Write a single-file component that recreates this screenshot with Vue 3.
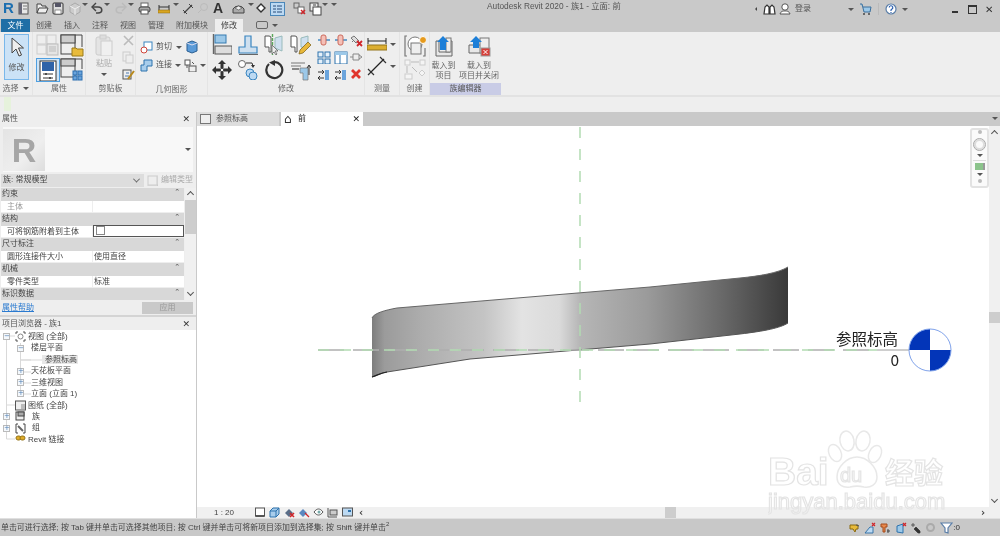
<script setup>
import { h } from 'vue'

// Small toolbar glyphs. Each string is the inside of an svg whose viewBox equals its pixel size.
const icons = {
  home: '<rect x="1" y="1" width="9" height="11" fill="#e8e8e8" stroke="#555"/><rect x="1" y="1" width="3" height="11" fill="#667"/><path d="M5 4h4M5 7h4" stroke="#777"/>',
  open: '<path d="M1 11V2h4l1 2h4v2M1 11l2-5h9l-2 5z" fill="#eee" stroke="#444"/>',
  save: '<rect x="1" y="1" width="10" height="11" rx="1" fill="#ddd" stroke="#333"/><rect x="3" y="1" width="6" height="4" fill="#556"/><rect x="3" y="8" width="6" height="4" fill="#fff" stroke="#555" stroke-width=".6"/>',
  cube: '<path d="M2 4l5-3 5 3v6l-5 3-5-3z" fill="#ccc" stroke="#aaa"/><path d="M2 4l5 3 5-3M7 7v6" stroke="#eee" fill="none"/>',
  undo: '<path d="M2 5h5c5 0 5 6 0 6H5" fill="none" stroke="#444" stroke-width="1.6"/><path d="M5 1L1 5l4 4" fill="none" stroke="#444" stroke-width="1.4"/>',
  redo: '<path d="M10 5H5c-5 0-5 6 0 6h2" fill="none" stroke="#bbb" stroke-width="1.6"/><path d="M7 1l4 4-4 4" fill="none" stroke="#bbb" stroke-width="1.4"/>',
  print: '<rect x="3" y="1" width="7" height="4" fill="#fff" stroke="#666"/><rect x="1" y="5" width="11" height="5" rx="2" fill="#aaa" stroke="#444"/><rect x="3" y="8" width="7" height="4" fill="#fff" stroke="#555"/>',
  dim: '<path d="M1 3v5M11 3v5M1 5h10" stroke="#333"/><rect x="0" y="8" width="12" height="3" fill="#d9a520" stroke="#8a6a10" stroke-width=".5"/>',
  line: '<path d="M2 11L10 3" stroke="#444" stroke-width="1.2"/><path d="M1 8l4 4M7 2l4 4" stroke="#444"/>',
  tag: '<circle cx="7" cy="5" r="3.5" fill="none" stroke="#bbb"/><path d="M1 11l3-3" stroke="#bbb"/>',
  view3d: '<path d="M1 7a6 5 0 0 1 11 0v4H1z" fill="#aaa" stroke="#444"/><path d="M3 6l3.500-2 3.500 2-3.500 2z" fill="#eee" stroke="#444" stroke-width=".6"/>',
  diamond: '<path d="M5 2l4 4-4 4-4-4z" fill="#fff" stroke="#333" stroke-width="1.400"/>',
  thin: '<rect x=".5" y=".5" width="14" height="13" fill="#bcd9f2" stroke="#4a86b8"/><path d="M3 4h3M3 7h3M3 10h3M7 4h5M7 7h5M7 10h5" stroke="#264a78"/>',
  xwin: '<rect x="1" y="1" width="5" height="5" fill="#ccc" stroke="#666"/><rect x="5" y="5" width="6" height="6" fill="#fff" stroke="#666"/><path d="M8 8l4 4M12 8l-4 4" stroke="#d0252a" stroke-width="1.500"/>',
  tile: '<rect x="1" y="1" width="8" height="8" fill="#eee" stroke="#444"/><rect x="4" y="5" width="8" height="8" fill="#fff" stroke="#444"/><path d="M4 3h3" stroke="#444"/>',
  cursor: '<path d="M5 3v15l4-4 3 7 2.500-1-3-7h5z" fill="#eee" stroke="#444"/>',
  famA: '<rect x="1" y="1" width="9" height="9" fill="#eee" stroke="#ccc"/><rect x="11" y="1" width="9" height="9" fill="#eee" stroke="#ccc"/><rect x="1" y="11" width="9" height="9" fill="#eee" stroke="#ccc"/><rect x="11" y="10" width="11" height="11" fill="#e4e4e4" stroke="#bbb"/><path d="M13 13h7M13 15h7M13 17h7" stroke="#bbb"/>',
  famB: '<rect x="1" y="1" width="14" height="19" fill="#eee" stroke="#444"/><rect x="1" y="1" width="14" height="8" fill="#ccc" stroke="#444"/><path d="M15 1h7v12" fill="none" stroke="#444"/><path d="M12 14h4l1 1h6v7H12z" fill="#e8bb3c" stroke="#9a7a18"/>',
  prop: '<rect x="3" y="2" width="16" height="20" fill="#fff" stroke="#333"/><rect x="5" y="3" width="12" height="9" fill="#2f63a8"/><path d="M6 15h10M6 19h10" stroke="#333"/><path d="M9 14v2M13 18v2" stroke="#333" stroke-width="1.500"/>',
  famT: '<rect x="1" y="1" width="14" height="18" fill="#eee" stroke="#444"/><rect x="1" y="1" width="14" height="7" fill="#ccc" stroke="#444"/><path d="M15 1h7v10" fill="none" stroke="#444"/><rect x="13" y="13" width="4" height="4" fill="#6aa4dc" stroke="#2d6fb0"/><rect x="18" y="13" width="4" height="4" fill="#6aa4dc" stroke="#2d6fb0"/><rect x="13" y="18" width="4" height="4" fill="#6aa4dc" stroke="#2d6fb0"/><rect x="18" y="18" width="4" height="4" fill="#6aa4dc" stroke="#2d6fb0"/>',
  paste: '<rect x="1" y="3" width="14" height="18" rx="2" fill="#e4e4e4" stroke="#ccc"/><rect x="5" y="1" width="6" height="4" fill="#ddd" stroke="#ccc"/><rect x="6" y="7" width="11" height="15" fill="#f0f0f0" stroke="#ccc"/>',
  scis: '<path d="M2 2l9 9M11 2l-9 9" stroke="#bbb" stroke-width="1.600"/>',
  copy: '<rect x="1" y="1" width="7" height="9" fill="#eee" stroke="#ccc"/><rect x="4" y="4" width="7" height="8" fill="#eee" stroke="#ccc"/>',
  brush: '<rect x="1" y="2" width="8" height="9" fill="#eee" stroke="#555"/><path d="M4 5h3M3 8h4" stroke="#4a78b0"/><path d="M6 11l6-8" stroke="#b8891c" stroke-width="2"/>',
  cut: '<rect x="4" y="1" width="8" height="8" fill="#fff" stroke="#3a85c0"/><circle cx="4" cy="9" r="3" fill="#fff" stroke="#d0453a"/>',
  join: '<path d="M4 1h8v6H7v5H1V6h3z" fill="#a8cdec" stroke="#2d72ad"/>',
  wall: '<path d="M2 3l5-2 5 2v8l-5 2-5-2z" fill="#5b9bd8" stroke="#2b5f92"/><path d="M2 3l5 2 5-2" fill="none" stroke="#dde"/>',
  geo: '<rect x="1" y="1" width="5" height="5" fill="#fff" stroke="#555"/><path d="M8 3l2 2M3 6v3" stroke="#555"/><rect x="5" y="7" width="7" height="6" fill="#eee" stroke="#555"/>',
  align: '<path d="M1.500 0v20" stroke="#666" stroke-width="1.400"/><rect x="3" y="1" width="11" height="8" fill="#9cc8e8" stroke="#357ab0"/><rect x="3" y="12" width="17" height="8" fill="#ddd" stroke="#555"/>',
  offset: '<path d="M1 19v-6h6V2h6v11h6v6z" fill="#cfe0ef" stroke="#3a85c0" stroke-width="1.200"/><path d="M1 20.500h19" stroke="#666" stroke-width="1.200"/>',
  mirA: '<path d="M1 2h4a2 2 0 0 1 2 2v14H5v-5H1z" fill="#fff" stroke="#555"/><path d="M8.500 0v21" stroke="#5aa85a" stroke-dasharray="3 1" stroke-width="1.400"/><path d="M11 4l7-2v15l-7-3z" fill="#cfe0ef" stroke="#9bb"/><path d="M8 11v9l2-2 2 3 1-1-2-3h3z" fill="#eee" stroke="#555" stroke-width=".7"/>',
  mirB: '<path d="M1 2h4a2 2 0 0 1 2 2v14H5v-5H1z" fill="#fff" stroke="#555"/><path d="M11 4l7-2v12l-7-1z" fill="#cfe0ef" stroke="#9bb"/><path d="M9 20l1-4 8-8 3 3-8 8z" fill="#e8b83a" stroke="#7a5c10" stroke-width=".7"/>',
  move: '<path d="M10 0l4 4h-2.500v4h-3V4H6zM10 20l4-4h-2.500v-4h-3v4H6zM0 10l4-4v2.500h4v3H4V14zM20 10l-4-4v2.500h-4v3h4V14z" fill="#333"/><circle cx="10" cy="10" r="1.800" fill="#fff" stroke="#333"/>',
  copyM: '<circle cx="4" cy="4" r="3.500" fill="#fff" stroke="#666"/><path d="M8 3h6l1 3" fill="none" stroke="#333"/><path d="M13 5l2 3 2-3" fill="#333"/><circle cx="12" cy="13" r="4" fill="#bcd9f2" stroke="#3a85c0"/><circle cx="15" cy="16" r="4" fill="#bcd9f2" stroke="#3a85c0"/>',
  rot: '<path d="M5 4a8 8 0 1 0 5-2" fill="none" stroke="#333" stroke-width="2.200"/><path d="M11 0v6L5 2.500z" fill="#333"/>',
  trim: '<path d="M1 3h14M1 6h10" stroke="#777"/><path d="M10 8h8v12h-5v-7h-3z" fill="#9cc8e8" stroke="#777" stroke-width=".7"/><path d="M2 9h7" stroke="#888" stroke-width="2"/><path d="M19 6v9M17 8l2-3 2 3" fill="none" stroke="#333"/>',
  split: '<path d="M1 6h12" stroke="#3a85c0" stroke-width="1.400"/><rect x="4" y="1" width="5" height="10" rx="2" fill="#f4c0b8" stroke="#cc6a5c"/>',
  grid4: '<g fill="#e4f0fa" stroke="#2d72ad"><rect x="1" y="1" width="5" height="5"/><rect x="8" y="1" width="5" height="5"/><rect x="1" y="8" width="5" height="5"/><rect x="8" y="8" width="5" height="5"/></g>',
  arr: '<path d="M1 4h6M5 2l2 2-2 2M1 10h6M3 8l-2 2 2 2" fill="none" stroke="#333"/><rect x="8" y="2" width="4" height="10" fill="#6aa4dc"/>',
  pane: '<rect x="1" y="1" width="12" height="12" fill="#fff" stroke="#2d72ad"/><rect x="1" y="1" width="12" height="3" fill="#9cc8e8"/><path d="M6 4v9" stroke="#2d72ad"/>',
  pinx: '<path d="M1 4l3-2 5 5-3 2zM2 8l2-2" fill="#ddd" stroke="#777"/><path d="M7 7l5 5M12 7l-5 5" stroke="#d0252a" stroke-width="1.800"/>',
  pin: '<path d="M3 3h6v6H3zM0 6h3M9 4l3 2-3 2" fill="none" stroke="#888"/>',
  xred: '<path d="M2 2l8 8M10 2l-8 8" stroke="#e0352c" stroke-width="2.800"/>',
  mDim: '<path d="M1 1v6M19 1v6M1 4h18" stroke="#222"/><rect x="0" y="8" width="20" height="5" fill="#dcae30" stroke="#94741a"/>',
  mLine: '<path d="M3 17L17 3" stroke="#222" stroke-width="1.200"/><path d="M1 13l6 6M13 1l6 6M3 17l-2 2" stroke="#333" stroke-width="1.200"/>',
  create: '<path d="M3 1H1v20h2M19 21h2v-8" fill="none" stroke="#777" stroke-width="1.200"/><circle cx="11" cy="9" r="7" fill="#fff" stroke="#777"/><rect x="7" y="8" width="10" height="11" fill="#eee" stroke="#777"/><circle cx="19" cy="5" r="3.500" fill="#e69a1c" stroke="#fff"/>',
  flow: '<g fill="#f4f4f4" stroke="#ccc"><rect x="1" y="1" width="5" height="5"/><rect x="16" y="1" width="5" height="5"/><rect x="1" y="15" width="7" height="5"/><path d="M18 11l3 3-3 3-3-3z"/></g><path d="M7 3h8M3 7v7M8 8l5 5" stroke="#bbb"/>',
  load: '<path d="M3 6h3v11h11V6h2v15H3z" fill="#e8e8e8" stroke="#666"/><rect x="13" y="3" width="5" height="14" fill="#eee" stroke="#777"/><path d="M10 1l6 6h-3v8H7V7H4z" fill="#1d7fd8"/>',
  loadX: '<path d="M1 10h16v8H1z" fill="#e8e8e8" stroke="#666"/><rect x="12" y="3" width="9" height="15" fill="#eee" stroke="#777"/><path d="M8 1l6 6h-3v6H5V7H2z" fill="#1d7fd8"/><rect x="13" y="13" width="9" height="8" fill="#d8403a" stroke="#999"/><path d="M15.500 15l4 4M19.500 15l-4 4" stroke="#fff"/>',
  binoc: '<path d="M1 11l1-7 2-2 2 2v7zM6 6h1M7 11V4l2-2 2 2 1 7z" fill="#fff" stroke="#333" stroke-width="1.200"/>',
  user: '<circle cx="6" cy="4" r="3.200" fill="#fff" stroke="#555"/><path d="M1 11c1-3 3-3 5-3s4 0 5 3z" fill="#fff" stroke="#555"/>',
  cart: '<path d="M1 1h2l2 8h6l1-5H4" fill="#9cc8e8" stroke="#3a6f9c"/><circle cx="5" cy="11" r="1" fill="#444"/><circle cx="10" cy="11" r="1" fill="#444"/>',
  help: '<circle cx="6" cy="6" r="5" fill="#fff" stroke="#5a7ea8" stroke-width="1.200"/><path d="M4.200 4.500a1.800 1.800 0 1 1 2.500 1.700L6 7v1M6 9v1" fill="none" stroke="#2a5fb0" stroke-width="1.200"/>',
  vView: '<rect x=".5" y="1" width="9" height="8" fill="#fff" stroke="#555"/><path d="M.5 9h9" stroke="#333" stroke-width="1.400"/>',
  vCube: '<path d="M1 4l3-3h6v6l-3 3H1z" fill="#a8cdec" stroke="#2d72ad"/><path d="M1 4h6v6M7 4l3-3" fill="none" stroke="#2d72ad"/>',
  vShade: '<path d="M1 6l4-4 4 4-4 4z" fill="#5a6e88"/><path d="M6 6l4 4M10 6l-4 4" stroke="#d0252a" stroke-width="1.600"/>',
  vSun: '<path d="M1 6l4-4 4 4-4 4z" fill="#5a88c0"/><path d="M7 6l4 4" stroke="#d0252a" stroke-width="1.200"/>',
  vCrop: '<path d="M1 5c3-4 6-4 9 0-3 4-6 4-9 0z" fill="#fff" stroke="#555"/><circle cx="6" cy="5" r="1.500" fill="#7aa"/>',
  vReg: '<path d="M1 1v9h9" fill="none" stroke="#555"/><rect x="3" y="3" width="7" height="5" fill="#ccc" stroke="#555"/>',
  vHide: '<rect x=".5" y="1" width="10" height="8" fill="#bcd9f2" stroke="#555"/><rect x="6" y="3" width="3" height="2" fill="#2d72ad"/>',
  sLink: '<path d="M1 3h8v4H7l-1 3-2-3H1z" fill="#e8bb3c" stroke="#8a6a10"/><path d="M7 3l3 1" stroke="#555"/>',
  sX1: '<path d="M1 11l5-6h3v6z" fill="#bcd9f2" stroke="#3a75a8"/><path d="M8 1l3 3M11 1L8 4" stroke="#d0252a" stroke-width="1.200"/>',
  sPin: '<path d="M2 2h6v3H6v5H4V5H2z" fill="#e8884c" stroke="#a54c1c"/><path d="M9 7v4M8 9h3" stroke="#444"/>',
  sX2: '<path d="M2 4l6-2v9l-6-1z" fill="#9cc8e8" stroke="#2d72ad"/><path d="M8 1l3 3M11 1L8 4" stroke="#d0252a" stroke-width="1.200"/>',
  sMove: '<path d="M1 3h4M3 1v4M6 5l4 4v2H8L4 7z" fill="#333" stroke="#333" stroke-width=".7"/>',
  sGear: '<circle cx="5.500" cy="5.500" r="3.500" fill="none" stroke="#aaa" stroke-width="2"/>',
  sFilter: '<path d="M1 1h11L8 6v5l-3-1V6z" fill="#fff" stroke="#5a7ea8" stroke-width="1.200"/>',
  fView: '<path d="M1 3V1h2M8 1h2v2M1 8v2h2M8 10h2V8" fill="none" stroke="#555"/><circle cx="5.500" cy="5.500" r="2.500" fill="none" stroke="#888"/>',
  fSheet: '<rect x=".5" y="1" width="10" height="9" fill="#eee" stroke="#555"/><rect x="6" y="4" width="4" height="5" fill="#bbb"/>',
  fFam: '<rect x="1" y="1" width="8" height="8" fill="#eee" stroke="#444"/><rect x="3" y="1" width="6" height="4" fill="#aaa" stroke="#444"/>',
  fGrp: '<path d="M1 1v9M10 1v9M1 1h2M8 1h2M1 10h2M8 10h2" fill="none" stroke="#444"/><path d="M3 3l5 5" stroke="#666" stroke-width="2"/>',
  fLink: '<rect x="1" y="2" width="5" height="4" rx="2" fill="#e0ac28" stroke="#94741a"/><rect x="5" y="2" width="5" height="4" rx="2" fill="#e0ac28" stroke="#94741a"/>',
  dropdown: '<path d="M1 1h6L4 4z" fill="#555"/>'
}

// Local icon helper: the glyph keeps its natural size, the box is set by w and h.
const Ic = (p) => h('svg', {
  class: 'ic',
  width: p.w,
  height: p.h || p.w,
  viewBox: `0 0 ${p.w} ${p.h || p.w}`,
  innerHTML: icons[p.n]
})
Ic.props = ['n', 'w', 'h']

// Quick access toolbar: x is the icon's left edge in the window.
const qat = [
  { n: 'home', w: 11, h: 13, x: 18 }, { n: 'open', w: 13, x: 36 }, { n: 'save', w: 12, h: 13, x: 52 },
  { n: 'cube', w: 14, x: 68 }, { n: 'dropdown', w: 8, h: 5, x: 81 }, { n: 'undo', w: 12, x: 91 },
  { n: 'dropdown', w: 8, h: 5, x: 103 }, { n: 'redo', w: 12, x: 115 }, { n: 'dropdown', w: 8, h: 5, x: 127 },
  { n: 'print', w: 13, x: 138 }, { n: 'dim', w: 12, x: 158 }, { n: 'dropdown', w: 8, h: 5, x: 172 },
  { n: 'line', w: 12, x: 182 }, { n: 'tag', w: 12, x: 197 }, { n: 'view3d', w: 13, x: 232 },
  { n: 'dropdown', w: 8, h: 5, x: 247 }, { n: 'diamond', w: 10, h: 12, x: 256 }, { n: 'thin', w: 15, h: 14, x: 270 },
  { n: 'xwin', w: 13, x: 293 }, { n: 'tile', w: 13, h: 14, x: 309 }, { n: 'dropdown', w: 8, h: 5, x: 321 },
  { n: 'dropdown', w: 8, h: 5, x: 330 }
]

const tabs = ['创建', '插入', '注释', '视图', '管理', '附加模块']

const modSmall = ['split', 'split', 'pinx', 'grid4', 'pane', 'pin', 'arr', 'arr', 'xred']

const propRows = [
  { group: '约束' },
  { label: '主体', value: '', dim: true },
  { group: '结构' },
  { label: '可将钢筋附着到主体', check: true },
  { group: '尺寸标注' },
  { label: '圆形连接件大小', value: '使用直径' },
  { group: '机械' },
  { label: '零件类型', value: '标准' },
  { group: '标识数据' }
]

const tree = [
  { text: '视图 (全部)', pad: 3, exp: '−', icon: 'fView' },
  { text: '楼层平面', pad: 17, exp: '−' },
  { text: '参照标高', pad: 42, sel: true },
  { text: '天花板平面', pad: 17, exp: '+' },
  { text: '三维视图', pad: 17, exp: '+' },
  { text: '立面 (立面 1)', pad: 17, exp: '+' },
  { text: '图纸 (全部)', pad: 15, icon: 'fSheet' },
  { text: '族', pad: 3, exp: '+', icon: 'fFam', wide: true },
  { text: '组', pad: 3, exp: '+', icon: 'fGrp', wide: true },
  { text: 'Revit 链接', pad: 15, icon: 'fLink' }
]

const viewIcons = ['vView', 'vCube', 'vShade', 'vSun', 'vCrop', 'vReg', 'vHide']
const statusIcons = ['sLink', 'sX1', 'sPin', 'sX2', 'sMove', 'sGear']

// Outline of the swept surface, in window coordinates.
const surface = 'M372 318C374 313 386 310 397 308L650 287L740 278C760 276 778 273 788 267V323C780 328 765 331 740 334L650 344L470 359L387 372C381 373 378 375 372 377Z'
const topEdge = 'M372 318C374 313 386 310 397 308L650 287L740 278C760 276 778 273 788 267'
const bottomEdge = 'M372 377C378 375 381 373 387 372L470 359L650 344L740 334C765 331 780 328 788 323'
</script>

<template>
  <div class="app">
    <header class="top">
      <div class="qat">
        <span class="logo">R</span>
        <Ic v-for="(q, i) in qat" :key="i" class="qi" :n="q.n" :w="q.w" :h="q.h" :style="{ left: q.x + 'px' }" />
        <span class="qi glyphA">A</span>
        <span class="title">Autodesk Revit 2020 - 族1 - 立面: 前</span>
        <div class="winbar">
          <span class="tri-l"></span>
          <Ic n="binoc" :w="13" />
          <Ic n="user" :w="12" />
          <span class="login">登录</span>
          <Ic class="drop1" n="dropdown" :w="8" :h="5" />
          <Ic n="cart" :w="13" />
          <i class="vsep"></i>
          <Ic n="help" :w="12" />
          <Ic class="drop2" n="dropdown" :w="8" :h="5" />
          <span class="min"></span>
          <span class="restore"></span>
          <span class="close">✕</span>
        </div>
      </div>
      <nav class="tabs">
        <span class="tab-file">文件</span>
        <span v-for="t in tabs" :key="t" class="tab">{{ t }}</span>
        <span class="tab active">修改</span>
        <span class="tab-box"></span>
        <Ic n="dropdown" :w="8" :h="5" />
      </nav>
    </header>

    <section class="ribbon">
      <div class="panel w33">
        <div class="body">
          <div class="modify-btn">
            <Ic n="cursor" :w="20" :h="22" />
            <span>修改</span>
          </div>
        </div>
        <div class="foot">选择 <Ic n="dropdown" :w="8" :h="5" /></div>
      </div>

      <div class="panel w53">
        <div class="body grid2">
          <Ic n="famA" :w="24" />
          <Ic n="famB" :w="24" />
          <span class="on"><Ic n="prop" :w="22" /></span>
          <Ic n="famT" :w="24" />
        </div>
        <div class="foot">属性</div>
      </div>

      <div class="panel w50">
        <div class="body clip">
          <div class="paste">
            <Ic n="paste" :w="18" :h="22" />
            <span>粘贴</span>
            <Ic n="dropdown" :w="8" :h="5" />
          </div>
          <div class="col3">
            <Ic n="scis" :w="13" />
            <Ic n="copy" :w="12" :h="13" />
            <Ic n="brush" :w="13" />
          </div>
        </div>
        <div class="foot">剪贴板</div>
      </div>

      <div class="panel w72">
        <div class="body geo">
          <div class="geo-row">
            <Ic n="cut" :w="13" />
            <span>剪切</span>
            <Ic n="dropdown" :w="8" :h="5" />
            <Ic n="wall" :w="14" />
          </div>
          <div class="geo-row">
            <Ic n="join" :w="13" />
            <span>连接</span>
            <Ic n="dropdown" :w="8" :h="5" />
            <Ic n="geo" :w="13" />
            <Ic n="dropdown" :w="8" :h="5" />
          </div>
        </div>
        <div class="foot">几何图形</div>
      </div>

      <div class="panel w157">
        <div class="body mods">
          <div class="bigs">
            <Ic n="align" :w="20" :h="21" />
            <Ic n="offset" :w="20" :h="21" />
            <Ic n="mirA" :w="20" :h="21" />
            <Ic n="mirB" :w="21" />
            <Ic n="move" :w="20" />
            <Ic n="copyM" :w="20" />
            <Ic n="rot" :w="20" />
            <Ic n="trim" :w="21" />
          </div>
          <div class="smalls">
            <Ic v-for="(s, i) in modSmall" :key="i" :n="s" :w="14" :h="13" />
          </div>
        </div>
        <div class="foot">修改</div>
      </div>

      <div class="panel w35">
        <div class="body measure">
          <div><Ic n="mDim" :w="20" :h="14" /><Ic n="dropdown" :w="8" :h="5" /></div>
          <div><Ic n="mLine" :w="20" /><Ic n="dropdown" :w="8" :h="5" /></div>
        </div>
        <div class="foot">测量</div>
      </div>

      <div class="panel w30">
        <div class="body create">
          <Ic n="create" :w="22" />
          <Ic n="flow" :w="22" />
        </div>
        <div class="foot">创建</div>
      </div>

      <div class="panel w71 noline">
        <div class="body loads">
          <div class="load">
            <Ic n="load" :w="22" />
            <span>载入到<br />项目</span>
          </div>
          <div class="load">
            <Ic n="loadX" :w="23" :h="22" />
            <span>载入到<br />项目并关闭</span>
          </div>
        </div>
        <div class="foot foot-ctx">族编辑器</div>
      </div>
    </section>

    <div class="optbar"><i class="optmark"></i></div>

    <main class="work">
      <aside class="side">
        <section class="props">
          <div class="ptitle"><span>属性</span><b>✕</b></div>
          <div class="preview">
            <div class="rthumb">R</div>
            <Ic class="pdrop" n="dropdown" :w="8" :h="5" />
          </div>
          <div class="selector">
            <div class="combo"><span>族: 常规模型</span><span class="chev"></span></div>
            <div class="edit-type"><Ic n="famA" :w="11" :h="11" /> 编辑类型</div>
          </div>
          <div class="ptable">
            <div class="rows">
              <template v-for="(r, i) in propRows" :key="i">
                <div v-if="r.group" class="grp"><span>{{ r.group }}</span><i>⌃</i></div>
                <div v-else class="prow">
                  <span class="k" :class="{ dim: r.dim }">{{ r.label }}</span>
                  <span class="v" :class="{ boxed: r.check }"><i v-if="r.check" class="cb"></i>{{ r.value }}</span>
                </div>
              </template>
            </div>
            <div class="pscroll">
              <span class="up"></span>
              <span class="thumb"></span>
              <span class="dn"></span>
            </div>
          </div>
          <div class="pfoot"><a>属性帮助</a><span class="apply">应用</span></div>
        </section>

        <section class="browser">
          <div class="ptitle"><span>项目浏览器 - 族1</span><b>✕</b></div>
          <div class="tree">
            <svg class="lines" width="60" height="116" viewBox="0 0 60 116">
              <path d="M6.500 8V108H15M20.500 12V63H31M20.500 29H31M20.500 41H31M20.500 52H31M6.500 74H15M6.500 86H3M6.500 97H3M20.500 12V29H42M6.500 5H15" fill="none" stroke="#d9d9d9" />
            </svg>
            <div v-for="r in tree" :key="r.text" class="node" :style="{ paddingLeft: r.pad + 'px' }">
              <span v-if="r.exp" class="exp">{{ r.exp }}</span>
              <Ic v-if="r.icon" class="nic" :n="r.icon" :w="11" :h="11" />
              <span class="ntext" :class="{ sel: r.sel, wide: r.wide, sub: r.exp && !r.icon }">{{ r.text }}</span>
            </div>
          </div>
        </section>
      </aside>

      <div class="stage">
        <div class="doctabs">
          <span class="dtab"><span class="dicon"></span>参照标高</span>
          <span class="dtab cur"><span class="hicon">⌂</span>前<b>✕</b></span>
          <Ic class="tabmenu" n="dropdown" :w="8" :h="5" />
        </div>
        <div class="canvas-row">
          <div class="canvas">
            <svg class="drawing" width="773" height="380" viewBox="197 126 773 380">
              <defs>
                <linearGradient id="shade" gradientUnits="userSpaceOnUse" x1="372" y1="0" x2="788" y2="0">
                  <stop offset="0" stop-color="#7d7d7d" />
                  <stop offset=".03" stop-color="#9b9b9b" />
                  <stop offset=".12" stop-color="#adadad" />
                  <stop offset=".27" stop-color="#c4c4c4" />
                  <stop offset=".36" stop-color="#e3e3e3" />
                  <stop offset=".45" stop-color="#dadada" />
                  <stop offset=".5" stop-color="#b6b6b6" />
                  <stop offset=".66" stop-color="#9b9b9b" />
                  <stop offset=".84" stop-color="#696969" />
                  <stop offset="1" stop-color="#393939" />
                </linearGradient>
              </defs>
              <path :d="surface" fill="url(#shade)" />
              <path :d="topEdge" fill="none" stroke="#666" />
              <path :d="bottomEdge" fill="none" stroke="#555" />
              <path d="M372 377C378 375 381 373 387 372" fill="none" stroke="#222" stroke-width="1.200" />
              <path d="M318 350H877" stroke="#aeaeae" stroke-width="1.300" stroke-dasharray="26 9" />
              <path d="M318 350H877" stroke="#b3dcb3" stroke-width="1.500" stroke-dasharray="11 11" />
              <path d="M580 127V413" stroke="#b3dcb3" stroke-width="1.500" stroke-dasharray="11 11" />
              <path d="M877 350H909" stroke="#aeaeae" stroke-width="1.200" />
              <text x="898" y="345" text-anchor="end" class="lvl">参照标高</text>
              <text x="899" y="366" text-anchor="end" class="lvl">0</text>
              <path d="M930 350V329A21 21 0 0 0 909 350Z" fill="#0335b8" />
              <path d="M930 350V371A21 21 0 0 0 951 350Z" fill="#0335b8" />
              <circle cx="930" cy="350" r="21" fill="none" stroke="#7fa2ea" />
            </svg>
            <div class="navbar">
              <i class="nav-dot"></i>
              <span class="wheel"></span>
              <Ic n="dropdown" :w="8" :h="5" />
              <i class="nav-sep"></i>
              <span class="zoomi"></span>
              <Ic n="dropdown" :w="8" :h="5" />
              <i class="nav-dot"></i>
            </div>
          </div>
          <div class="vscroll">
            <span class="sup"></span>
            <span class="vthumb"></span>
            <span class="sdn"></span>
          </div>
        </div>
        <div class="viewbar">
          <span class="scale">1 : 20</span>
          <Ic v-for="v in viewIcons" :key="v" :n="v" :w="12" :h="11" />
          <span class="sleft">‹</span>
          <span class="hthumb"></span>
          <span class="sright">›</span>
        </div>
      </div>
    </main>

    <footer class="status">
      <span class="stext">单击可进行选择; 按 Tab 键并单击可选择其他项目; 按 Ctrl 键并单击可将新项目添加到选择集; 按 Shift 键并单击<sup>2</sup></span>
      <div class="sicons">
        <Ic v-for="s in statusIcons" :key="s" :n="s" :w="12" />
        <Ic n="sFilter" :w="13" :h="12" />
        <span class="fcount">:0</span>
      </div>
    </footer>

    <svg class="mark" width="240" height="110" viewBox="0 0 240 110">
      <g fill="#fff" stroke="#e8e8e8" stroke-width="1.500">
        <ellipse cx="79" cy="16" rx="7" ry="10" transform="rotate(-12 79 16)" />
        <ellipse cx="95" cy="16" rx="7" ry="10" transform="rotate(12 95 16)" />
        <ellipse cx="67" cy="28" rx="6" ry="9" transform="rotate(-25 67 28)" />
        <ellipse cx="107" cy="29" rx="6" ry="9" transform="rotate(25 107 29)" />
        <path d="M69 52c0-10 10-20 20-20s20 10 20 20c0 8-7 11-13 10-4-1-10-1-14 0-7 1-13-2-13-10z" />
      </g>
      <text x="0" y="60" class="wm wm-bai">Bai</text>
      <text x="72" y="57" class="wm wm-du">du</text>
      <text x="117" y="59" class="wm wm-cn">经验</text>
      <text x="0" y="84" class="wm wm-url">jingyan.baidu.com</text>
    </svg>
  </div>
</template>

<style>
html, body { margin: 0; background: #eee; }
</style>

<style scoped>
.app {
  position: relative;
  width: 1000px;
  height: 536px;
  overflow: hidden;
  display: flex;
  flex-direction: column;
  background: #eee;
  color: #555;
  font: 8px/1.2 "Liberation Sans", "Noto Sans CJK SC", sans-serif;
  filter: blur(0.35px);
}
.ic { display: block; flex: none; }

/* title + tabs */
.top { background: #c9c9c9; height: 32px; flex: none; }
.qat { position: relative; height: 19px; }
.logo { position: absolute; left: 3px; top: -1px; font: bold 15px "Liberation Sans", sans-serif; color: #1d6fb0; }
.qi { position: absolute; top: 2px; }
.glyphA { left: 213px; top: 0; font: bold 14px "Liberation Sans", sans-serif; color: #333; }
.title { position: absolute; left: 487px; top: 2px; font-size: 8.300px; color: #555; white-space: nowrap; }
.winbar { position: absolute; right: 5px; top: 2px; display: flex; align-items: center; gap: 3px; height: 14px; }
.tri-l { width: 0; height: 0; border: 2.500px solid transparent; border-right-color: #444; border-left: 0; margin-right: 3px; }
.login { font-size: 8px; width: 49px; margin-left: 1px; }
.drop1 { margin-right: 1px; }
.vsep { width: 1px; height: 12px; background: #bbb; margin: 0 3px; }
.drop2 { margin-left: 1px; margin-right: 40px; }
.min { width: 6px; height: 2px; background: #333; margin-top: 6px; margin-right: 7px; }
.restore { width: 7px; height: 6px; border: 1px solid #333; border-top-width: 2px; margin-right: 5px; }
.close { font: bold 10px "DejaVu Sans", sans-serif; color: #333; width: 10px; }

.tabs { display: flex; align-items: flex-end; height: 13px; padding-left: 1px; }
.tab-file { width: 29px; height: 13px; background: #1f6ea6; color: #fff; text-align: center; line-height: 13px; }
.tab { padding: 0 6px; height: 13px; line-height: 13px; color: #555; white-space: nowrap; }
.tab.active { background: #eee; margin-left: 1px; color: #444; padding: 0 6px; }
.tab-box { width: 10px; height: 6px; border: 1px solid #666; border-radius: 2px; margin: 0 3px 3px 13px; }
.tabs > .ic { margin-bottom: 4px; }

/* ribbon */
.ribbon { height: 65px; flex: none; display: flex; border-bottom: 2px solid #e2e2e2; box-sizing: border-box; }
.panel { display: flex; flex-direction: column; border-right: 1px solid #e4e4e4; box-sizing: border-box; flex: none; }
.panel.noline { border-right: 0; }
.w33 { width: 33px; } .w53 { width: 53px; } .w50 { width: 50px; } .w72 { width: 72px; }
.w157 { width: 157px; } .w35 { width: 35px; } .w30 { width: 30px; } .w71 { width: 71px; }
.body { height: 50px; }
.foot { height: 13px; display: flex; align-items: center; justify-content: center; gap: 3px; color: #666; }
.foot-ctx { background: #c9cce6; color: #555; }

.modify-btn { margin: 2px 3px 0 4px; height: 46px; background: #cbe2f6; border: 1px solid #79b7ea; box-sizing: border-box; display: flex; flex-direction: column; align-items: center; gap: 6px; color: #555; }
.grid2 { display: grid; grid-template-columns: 24px 24px; grid-auto-rows: 24px; padding: 2px 0 0 3px; }
.on { background: #cfe4f6; border: 1px solid #4f9fe0; box-sizing: border-box; display: flex; align-items: center; justify-content: center; }
.on .ic { margin: -1px; }
.clip { display: flex; padding: 2px 0 0 7px; gap: 7px; }
.paste { width: 22px; display: flex; flex-direction: column; align-items: center; gap: 3px; color: #aaa; }
.col3 { display: flex; flex-direction: column; gap: 4px; }
.geo { display: flex; flex-direction: column; gap: 4px; padding: 8px 0 0 4px; }
.geo-row { display: flex; align-items: center; gap: 2px; height: 14px; color: #555; }
.geo-row span { margin-left: 1px; width: 17px; white-space: nowrap; }
.mods { display: flex; padding: 2px 0 0 4px; }
.bigs { display: grid; grid-template-columns: repeat(4, 26px); row-gap: 3px; }
.smalls { display: grid; grid-template-columns: repeat(3, 16.500px); row-gap: 3px; margin-left: 1px; }
.measure { padding: 5px 0 0 2px; display: flex; flex-direction: column; gap: 5px; }
.measure div { display: flex; align-items: center; gap: 2px; }
.create { padding: 3px 0 0 4px; display: flex; flex-direction: column; gap: 2px; }
.loads { display: flex; padding-top: 3px; }
.load { display: flex; flex-direction: column; align-items: center; gap: 4px; text-align: center; color: #666; line-height: 10px; }
.load:first-child { width: 27px; }
.load:last-child { width: 42px; margin-left: 1px; }

.optbar { height: 15px; flex: none; }
.optmark { display: block; width: 7px; height: 14px; background: #e6f2dc; margin-left: 4px; }

/* work area */
.work { flex: 1; min-height: 0; display: flex; background: #c9c9c9; }
.side { width: 196px; flex: none; display: flex; flex-direction: column; gap: 2px; background: #d4d4d4; }
.props { height: 203px; background: #eee; flex: none; display: flex; flex-direction: column; }
.ptitle { height: 14px; display: flex; align-items: center; justify-content: space-between; padding: 0 6px 0 2px; color: #555; flex: none; }
.ptitle b { font: bold 9px "DejaVu Sans", sans-serif; color: #333; }
.preview { height: 46px; margin: 1px 3px 0; background: #f8f8f8; display: flex; align-items: center; justify-content: space-between; padding-right: 1px; }
.rthumb { width: 42px; height: 42px; background: linear-gradient(135deg, #e4e4e4, #eee 60%, #ddd); font: bold 34px/42px "Liberation Sans", sans-serif; text-align: center; color: #a6a6a6; }
.selector { display: flex; align-items: center; gap: 3px; height: 14px; margin-top: 1px; padding-left: 1px; }
.combo { width: 143px; height: 13px; background: #ddd; display: flex; justify-content: space-between; align-items: center; padding: 0 5px 0 2px; box-sizing: border-box; color: #444; }
.chev { width: 4px; height: 4px; border-right: 1px solid #666; border-bottom: 1px solid #666; transform: rotate(45deg) translate(-1px, -1px); }
.edit-type { display: flex; align-items: center; gap: 3px; color: #aaa; white-space: nowrap; }
.ptable { display: flex; height: 112px; margin-top: 1px; flex: none; overflow: hidden; }
.rows { width: 183px; margin-left: 1px; flex: none; }
.grp { height: 12.400px; background: #d8d8d8; display: flex; justify-content: space-between; padding: 0 4px 0 1px; line-height: 12px; color: #444; box-sizing: border-box; }
.grp i { font: bold 7px "DejaVu Sans", sans-serif; color: #555; }
.prow { height: 12.600px; display: flex; gap: 1px; padding-bottom: 1px; box-sizing: border-box; }
.k, .v { background: #fff; line-height: 11px; color: #444; display: flex; align-items: center; white-space: nowrap; }
.k { width: 91px; padding-left: 6px; box-sizing: border-box; }
.k.dim { color: #999; }
.v { flex: 1; padding-left: 1px; }
.v.boxed { border: 1px solid #555; box-sizing: border-box; margin-top: -1px; height: 12.500px; }
.cb { width: 7px; height: 7px; border: 1px solid #888; margin-left: 1px; }
.pscroll { width: 11px; margin-left: 1px; position: relative; background: #f0f0f0; }
.thumb { position: absolute; left: 0; right: 0; top: 12px; height: 34px; background: #cdcdcd; }
.up, .dn { position: absolute; left: 3px; width: 4px; height: 4px; border-left: 1px solid #555; border-top: 1px solid #555; transform: rotate(45deg); top: 4px; }
.dn { top: auto; bottom: 5px; transform: rotate(225deg); }
.pfoot { display: flex; align-items: center; justify-content: space-between; padding: 1px 3px 0 2px; height: 14px; }
.pfoot a { color: #2a7ad0; text-decoration: underline; }
.apply { width: 51px; height: 12px; background: #c9c9c9; color: #999; text-align: center; line-height: 12px; }

.browser { flex: 1; background: #fff; display: flex; flex-direction: column; }
.browser .ptitle { background: #eee; height: 13px; }
.tree { position: relative; flex: 1; padding-top: 1px; }
.lines { position: absolute; left: 0; top: 1px; }
.node { position: relative; height: 11.450px; display: flex; align-items: center; color: #444; white-space: nowrap; }
.exp { width: 7px; height: 7px; box-sizing: border-box; border: 1px solid #bbb; background: #f4f8fc; color: #4a7ab0; font: 7px/5px "DejaVu Sans", sans-serif; text-align: center; margin-right: 5px; }
.nic { margin-right: 2px; background: #fff; }
.ntext { background: #fff; }
.ntext.sub { margin-left: 2px; }
.ntext.wide { margin-left: 4px; }
.ntext.sel { background: #e8e8e8; padding: 0 1px 0 3px; }

/* view area */
.stage { flex: 1; min-width: 0; display: flex; flex-direction: column; margin-left: 1px; }
.doctabs { height: 14px; flex: none; display: flex; align-items: flex-end; position: relative; }
.dtab { width: 82px; height: 14px; background: #ddd; display: flex; align-items: center; gap: 5px; padding-left: 3px; box-sizing: border-box; color: #555; }
.dtab.cur { background: #fff; margin-left: 2px; position: relative; color: #222; gap: 3px; }
.dtab b { position: absolute; right: 3px; font: bold 9px "DejaVu Sans", sans-serif; color: #222; }
.dicon { width: 9px; height: 8px; border: 1px solid #777; background: #eee; }
.hicon { font: 12px "DejaVu Sans", sans-serif; color: #333; width: 11px; }
.tabmenu { position: absolute; right: 1px; top: 4px; }
.canvas-row { flex: 1; min-height: 0; display: flex; }
.canvas { flex: 1; position: relative; background: #fff; overflow: hidden; }
.drawing { position: absolute; left: 0; top: 0; }
.lvl { font: 15.500px "Noto Sans CJK SC", "Liberation Sans", sans-serif; fill: #222; }
.navbar { position: absolute; left: 773px; top: 2px; width: 19px; height: 60px; box-sizing: border-box; background: #fafafa; border: 2px solid #e2e2e2; border-radius: 3px; display: flex; flex-direction: column; align-items: center; gap: 2px; }
.nav-dot { width: 4px; height: 4px; border-radius: 50%; background: #bbb; }
.wheel { width: 11px; height: 11px; border: 1px solid #aaa; border-radius: 50%; box-shadow: inset 0 0 0 2px #ddd; margin-top: 2px; }
.nav-sep { width: 13px; height: 1px; background: #ddd; }
.zoomi { width: 8px; height: 7px; background: #8cc48c; border-right: 2px solid #999; }
.vscroll { width: 11px; flex: none; background: #f0f0f0; position: relative; }
.vthumb { position: absolute; top: 186px; left: 0; right: 0; height: 11px; background: #cdcdcd; }
.sup, .sdn { position: absolute; left: 3px; width: 4px; height: 4px; border-left: 1px solid #555; border-top: 1px solid #555; transform: rotate(45deg); top: 5px; }
.sdn { top: auto; bottom: 5px; transform: rotate(225deg); }
.viewbar { height: 11px; flex: none; display: flex; align-items: center; gap: 2.500px; background: #f0f0f0; position: relative; }
.scale { margin-left: 17px; width: 38px; color: #444; white-space: pre; }
.sleft { font: bold 10px/10px "DejaVu Sans", sans-serif; color: #444; margin-left: 3px; }
.hthumb { position: absolute; left: 468px; top: 0; width: 11px; height: 11px; background: #cdcdcd; }
.sright { position: absolute; right: 15px; font: bold 10px/10px "DejaVu Sans", sans-serif; color: #444; }

.status { height: 18px; flex: none; background: #c8c8c8; border-top: 1px solid #e0e0e0; box-sizing: border-box; display: flex; align-items: center; justify-content: space-between; padding: 0 40px 0 1px; }
.stext { font-size: 7.950px; color: #444; white-space: nowrap; }
.stext sup { font-size: 6px; line-height: 0; }
.sicons { display: flex; align-items: center; gap: 3.200px; color: #333; }
.fcount { margin-left: -3px; }

.mark { position: absolute; left: 768px; top: 425px; pointer-events: none; }
.wm { fill: rgba(255, 255, 255, .35); stroke: #e4e4e4; stroke-width: 1.200px; font-family: "Liberation Sans", "Noto Sans CJK SC", sans-serif; }
.wm-bai { font-size: 39px; font-weight: 700; }
.wm-du { font-size: 20px; }
.wm-cn { font-size: 29px; font-weight: 700; }
.wm-url { font-size: 22px; }
</style>
